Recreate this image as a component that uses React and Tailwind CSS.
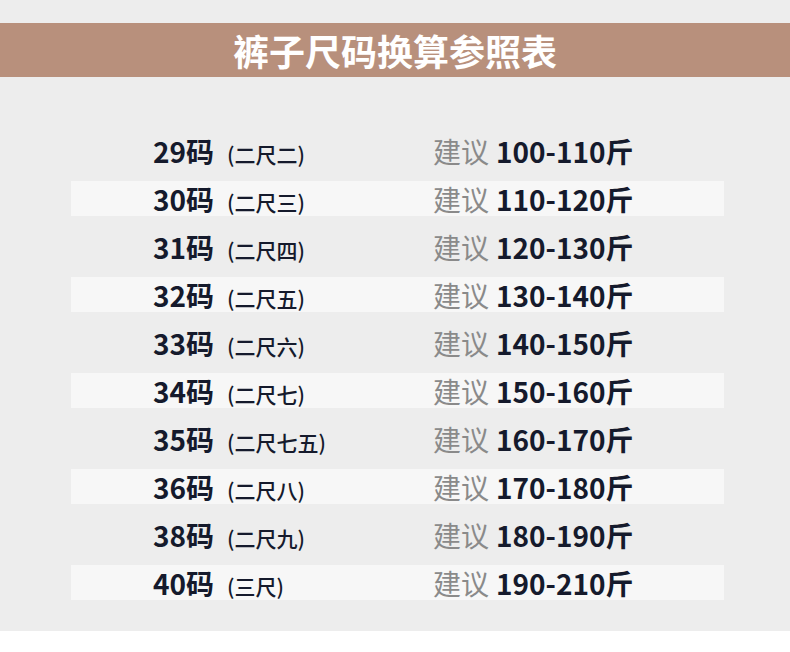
import React from "react";

const rows = [
  { size: "29码", chi: "(二尺二)", range: "100-110斤" },
  { size: "30码", chi: "(二尺三)", range: "110-120斤" },
  { size: "31码", chi: "(二尺四)", range: "120-130斤" },
  { size: "32码", chi: "(二尺五)", range: "130-140斤" },
  { size: "33码", chi: "(二尺六)", range: "140-150斤" },
  { size: "34码", chi: "(二尺七)", range: "150-160斤" },
  { size: "35码", chi: "(二尺七五)", range: "160-170斤" },
  { size: "36码", chi: "(二尺八)", range: "170-180斤" },
  { size: "38码", chi: "(二尺九)", range: "180-190斤" },
  { size: "40码", chi: "(三尺)", range: "190-210斤" },
];

export default function App() {
  return (
    <div className="w-[790px] h-[652px] bg-white font-['Noto_Sans_CJK_SC',sans-serif]">
      <div className="bg-[#ededed] h-[631px] pt-[23px]">
        {/* Header */}
        <div className="h-[54px] bg-[#b8907c] flex items-center justify-center">
          <h1 className="text-white font-bold text-[36px] leading-none">裤子尺码换算参照表</h1>
        </div>

        {/* Table */}
        <div className="mt-[56px] ml-[71px] w-[653px] flex flex-col gap-[13px]">
          {rows.map((row, idx) => (
            <div
              key={idx}
              className={
                "h-[35px] flex items-center pl-[82px] " + (idx % 2 === 1 ? "bg-[#f7f7f7]" : "")
              }
            >
              <div className="w-[280px] flex items-baseline">
                <span className="text-[28px] font-bold text-[#151a2c] leading-none">{row.size}</span>
                <span className="ml-[13px] text-[21px] font-medium text-[#151a2c] leading-none">{row.chi}</span>
              </div>
              <div className="flex items-center">
                <span className="text-[28px] text-[#8a8a8a] leading-none">建议</span>
                <span className="ml-[7px] text-[28px] font-bold text-[#151a2c] leading-none">{row.range}</span>
              </div>
            </div>
          ))}
        </div>
      </div>
    </div>
  );
}
